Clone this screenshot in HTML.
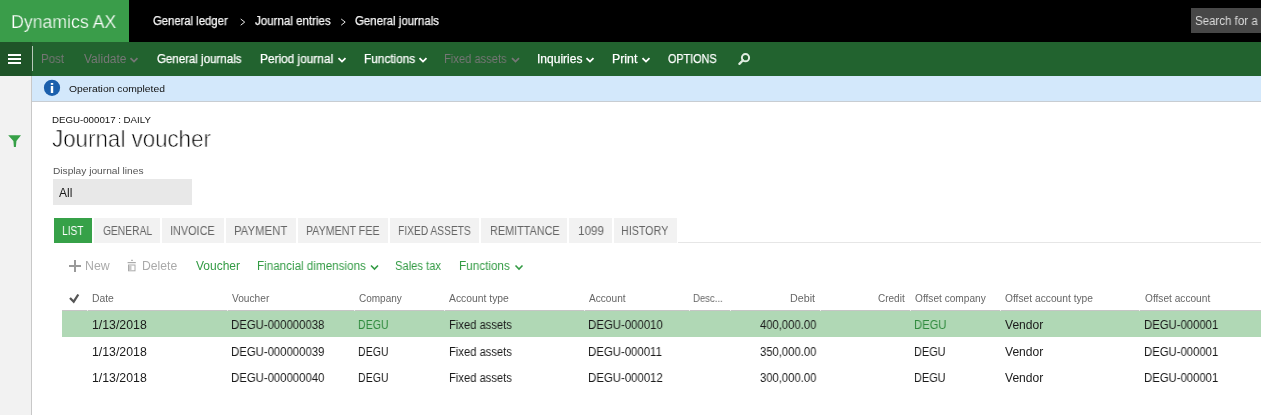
<!DOCTYPE html>
<html><head><meta charset="utf-8">
<style>
html,body{margin:0;padding:0;}
body{width:1261px;height:415px;overflow:hidden;position:relative;background:#fff;font-family:"Liberation Sans",sans-serif;}
.r{position:absolute;}
.t{position:absolute;transform-origin:0 0;will-change:transform;white-space:nowrap;line-height:normal;font-family:"Liberation Sans",sans-serif;}
.bl{display:inline-block;width:0;height:0;vertical-align:baseline;}
svg{position:absolute;overflow:visible;}
</style></head><body>
<!-- top bar -->
<div class="r" style="left:0;top:0;width:1261px;height:42px;background:#000"></div>
<div class="r" style="left:0;top:0;width:129px;height:42px;background:#3a9d4a"></div>
<div class="r" style="left:1191px;top:8px;width:70px;height:25px;background:#474747"></div>
<svg style="left:0;top:0" width="1261" height="42">
 <polyline points="240.7,19 244.7,22.1 240.7,25.2" fill="none" stroke="#e8e8e8" stroke-width="1"/>
 <polyline points="341.2,19 345.2,22.1 341.2,25.2" fill="none" stroke="#e8e8e8" stroke-width="1"/>
</svg>
<!-- action bar -->
<div class="r" style="left:0;top:42px;width:1261px;height:34px;background:#22632f"></div>
<div class="r" style="left:0;top:42px;width:32px;height:34px;background:#1f5428"></div>
<div class="r" style="left:8px;top:54px;width:13px;height:2px;background:#fff"></div>
<div class="r" style="left:8px;top:58px;width:13px;height:2px;background:#fff"></div>
<div class="r" style="left:8px;top:62px;width:13px;height:2px;background:#fff"></div>
<div class="r" style="left:32px;top:46px;width:1px;height:25px;background:#b9c9bb"></div>
<svg style="left:0;top:42px" width="1261" height="34">
 <g fill="none" stroke-width="1.8" stroke-linecap="butt">
  <polyline points="130.5,16.1 134,19.6 137.5,16.1" stroke="#767676"/>
  <polyline points="338.5,16.1 342,19.6 345.5,16.1" stroke="#fff"/>
  <polyline points="419.5,16.1 423,19.6 426.5,16.1" stroke="#fff"/>
  <polyline points="512,16.1 515.5,19.6 519,16.1" stroke="#767676"/>
  <polyline points="586.5,16.1 590,19.6 593.5,16.1" stroke="#fff"/>
  <polyline points="642.5,16.1 646,19.6 649.5,16.1" stroke="#fff"/>
 </g>
 <circle cx="745.5" cy="15.7" r="3.6" fill="none" stroke="#e0ece0" stroke-width="2"/>
 <line x1="743" y1="18.3" x2="739.4" y2="21.9" stroke="#e0ece0" stroke-width="2.3" stroke-linecap="round"/>
</svg>
<!-- sidebar -->
<div class="r" style="left:0;top:76px;width:31px;height:339px;background:#f2f2f2"></div>
<div class="r" style="left:31px;top:76px;width:1px;height:339px;background:#c8c8c8"></div>
<svg style="left:0;top:0" width="32" height="415">
 <polygon points="8.2,135.2 21,135.2 16.4,141 15.9,147 13.9,147 13.4,141" fill="#36a047"/>
</svg>
<!-- info bar -->
<div class="r" style="left:32px;top:76px;width:1229px;height:25px;background:#d3e8fb"></div>
<div class="r" style="left:32px;top:101px;width:1229px;height:1px;background:#c8cdd2"></div>
<svg style="left:0;top:0" width="80" height="110">
 <circle cx="52" cy="87.8" r="8.1" fill="#1b5fac"/>
 <rect x="50.8" y="83" width="2.4" height="1.8" fill="#fff"/>
 <rect x="50.8" y="86" width="2.4" height="7" fill="#fff"/>
</svg>
<!-- dropdown -->
<div class="r" style="left:53px;top:179px;width:139px;height:26px;background:#e8e8e8"></div>
<!-- tabs -->
<div class="r" style="left:54px;top:218px;width:38px;height:25px;background:#36a148"></div>
<div class="r" style="left:94px;top:218px;width:66px;height:25px;background:#f2f2f2"></div>
<div class="r" style="left:162px;top:218px;width:62px;height:25px;background:#f2f2f2"></div>
<div class="r" style="left:226px;top:218px;width:70px;height:25px;background:#f2f2f2"></div>
<div class="r" style="left:298px;top:218px;width:90px;height:25px;background:#f2f2f2"></div>
<div class="r" style="left:390px;top:218px;width:89px;height:25px;background:#f2f2f2"></div>
<div class="r" style="left:481px;top:218px;width:86px;height:25px;background:#f2f2f2"></div>
<div class="r" style="left:569px;top:218px;width:43px;height:25px;background:#f2f2f2"></div>
<div class="r" style="left:614px;top:218px;width:63px;height:25px;background:#f2f2f2"></div>
<div class="r" style="left:678px;top:242px;width:583px;height:1px;background:#e6e6e6"></div>
<!-- toolbar icons -->
<svg style="left:0;top:0" width="1261" height="415">
 <rect x="69" y="265" width="12" height="2" fill="#9a9a9a"/>
 <rect x="74" y="260" width="2" height="12" fill="#9a9a9a"/>
 <rect x="131" y="259.8" width="2" height="1" fill="#aaa"/>
 <rect x="127.6" y="262" width="8.2" height="1.2" fill="#aaa"/>
 <rect x="128.5" y="265" width="6.5" height="5.8" fill="none" stroke="#aaa" stroke-width="1"/>
 <rect x="129" y="265.5" width="2.5" height="5" fill="#c8c8c8"/>
 <g fill="none" stroke-width="1.6" stroke="#339b44">
  <polyline points="371,265.5 374.5,269 378,265.5"/>
  <polyline points="515.5,265.5 519,269 522.5,265.5"/>
 </g>
 <polyline points="70,298 73.7,301.7 78.3,294.5" fill="none" stroke="#555" stroke-width="2.3"/>
</svg>
<!-- grid -->
<div class="r" style="left:62px;top:310px;width:1199px;height:1px;background:#c6c6c6"></div>
<div class="r" style="left:62px;top:311px;width:1199px;height:26px;background:#b0d8b5"></div>
<div class="r" style="left:87px;top:310px;width:1px;height:1px;background:#eee"></div>
<div class="r" style="left:227px;top:310px;width:1px;height:1px;background:#eee"></div>
<div class="r" style="left:354px;top:310px;width:1px;height:1px;background:#eee"></div>
<div class="r" style="left:444px;top:310px;width:1px;height:1px;background:#eee"></div>
<div class="r" style="left:584px;top:310px;width:1px;height:1px;background:#eee"></div>
<div class="r" style="left:689px;top:310px;width:1px;height:1px;background:#eee"></div>
<div class="r" style="left:730px;top:310px;width:1px;height:1px;background:#eee"></div>
<div class="r" style="left:820px;top:310px;width:1px;height:1px;background:#eee"></div>
<div class="r" style="left:910px;top:310px;width:1px;height:1px;background:#eee"></div>
<div class="r" style="left:1000px;top:310px;width:1px;height:1px;background:#eee"></div>
<div class="r" style="left:1139px;top:310px;width:1px;height:1px;background:#eee"></div>
<div class="t" id="t0" style="left:11.00px;top:11.81px;font-size:18px;color:#ffffff;transform:scaleX(0.9835);-webkit-text-stroke:0.25px #3a9d4a">Dynamics AX<i class="bl"></i></div>
<div class="t" id="t1" style="left:153.32px;top:13.91px;font-size:12px;color:#f0f0f0;transform:scaleX(0.9405);-webkit-text-stroke:0.25px #fff">General ledger<i class="bl"></i></div>
<div class="t" id="t2" style="left:254.90px;top:13.91px;font-size:12px;color:#f0f0f0;transform:scaleX(0.9617);-webkit-text-stroke:0.25px #fff">Journal entries<i class="bl"></i></div>
<div class="t" id="t3" style="left:355.24px;top:13.91px;font-size:12px;color:#f0f0f0;transform:scaleX(0.9534);-webkit-text-stroke:0.25px #fff">General journals<i class="bl"></i></div>
<div class="t" id="t4" style="left:1195.00px;top:13.81px;font-size:12px;color:#dcdcdc;transform:scaleX(0.9594);">Search for a<i class="bl"></i></div>
<div class="t" id="t5" style="left:41.34px;top:51.91px;font-size:12px;color:#767676;transform:scaleX(0.9575);">Post<i class="bl"></i></div>
<div class="t" id="t6" style="left:83.90px;top:51.91px;font-size:12px;color:#767676;transform:scaleX(1.0006);">Validate<i class="bl"></i></div>
<div class="t" id="t7" style="left:156.90px;top:51.91px;font-size:12px;color:#ffffff;transform:scaleX(0.9592);-webkit-text-stroke:0.25px #fff">General journals<i class="bl"></i></div>
<div class="t" id="t8" style="left:260.00px;top:51.91px;font-size:12px;color:#ffffff;transform:scaleX(0.9880);-webkit-text-stroke:0.25px #fff">Period journal<i class="bl"></i></div>
<div class="t" id="t9" style="left:364.00px;top:51.91px;font-size:12px;color:#ffffff;transform:scaleX(0.9839);-webkit-text-stroke:0.25px #fff">Functions<i class="bl"></i></div>
<div class="t" id="t10" style="left:444.34px;top:51.91px;font-size:12px;color:#767676;transform:scaleX(0.9309);">Fixed assets<i class="bl"></i></div>
<div class="t" id="t11" style="left:537.00px;top:51.91px;font-size:12px;color:#ffffff;transform:scaleX(1.0016);-webkit-text-stroke:0.25px #fff">Inquiries<i class="bl"></i></div>
<div class="t" id="t12" style="left:612.00px;top:51.91px;font-size:12px;color:#ffffff;transform:scaleX(1.0273);-webkit-text-stroke:0.25px #fff">Print<i class="bl"></i></div>
<div class="t" id="t13" style="left:667.90px;top:51.91px;font-size:12px;color:#ffffff;transform:scaleX(0.9002);-webkit-text-stroke:0.25px #fff">OPTIONS<i class="bl"></i></div>
<div class="t" id="t14" style="left:68.56px;top:83.01px;font-size:9.5px;color:#111111;transform:scaleX(1.0881);">Operation completed<i class="bl"></i></div>
<div class="t" id="t15" style="left:52.34px;top:113.91px;font-size:9.7px;color:#111111;transform:scaleX(0.9965);">DEGU-000017 : DAILY<i class="bl"></i></div>
<div class="t" id="t16" style="left:51.84px;top:124.91px;font-size:24px;color:#000000;transform:scaleX(0.9307);-webkit-text-stroke:0.65px #fff">Journal voucher<i class="bl"></i></div>
<div class="t" id="t17" style="left:52.50px;top:164.91px;font-size:9.5px;color:#555555;transform:scaleX(1.0711);">Display journal lines<i class="bl"></i></div>
<div class="t" id="t18" style="left:59.40px;top:185.70px;font-size:12px;color:#1a1a1a;transform:scaleX(0.9768);">All<i class="bl"></i></div>
<div class="t" id="t19" style="left:62.00px;top:224.01px;font-size:12px;color:#ffffff;transform:scaleX(0.8483);">LIST<i class="bl"></i></div>
<div class="t" id="t20" style="left:102.90px;top:224.01px;font-size:12px;color:#666666;transform:scaleX(0.8551);">GENERAL<i class="bl"></i></div>
<div class="t" id="t21" style="left:170.34px;top:224.01px;font-size:12px;color:#666666;transform:scaleX(0.9061);">INVOICE<i class="bl"></i></div>
<div class="t" id="t22" style="left:234.00px;top:224.01px;font-size:12px;color:#666666;transform:scaleX(0.9477);">PAYMENT<i class="bl"></i></div>
<div class="t" id="t23" style="left:306.16px;top:224.01px;font-size:12px;color:#666666;transform:scaleX(0.8888);">PAYMENT FEE<i class="bl"></i></div>
<div class="t" id="t24" style="left:398.00px;top:224.01px;font-size:12px;color:#666666;transform:scaleX(0.8526);">FIXED ASSETS<i class="bl"></i></div>
<div class="t" id="t25" style="left:489.50px;top:224.01px;font-size:12px;color:#666666;transform:scaleX(0.9036);">REMITTANCE<i class="bl"></i></div>
<div class="t" id="t26" style="left:578.16px;top:224.01px;font-size:12px;color:#666666;transform:scaleX(0.9727);">1099<i class="bl"></i></div>
<div class="t" id="t27" style="left:621.42px;top:224.01px;font-size:12px;color:#666666;transform:scaleX(0.8936);">HISTORY<i class="bl"></i></div>
<div class="t" id="t28" style="left:85.00px;top:258.81px;font-size:12px;color:#aaaaaa;transform:scaleX(1.0274);">New<i class="bl"></i></div>
<div class="t" id="t29" style="left:142.08px;top:258.81px;font-size:12px;color:#aaaaaa;transform:scaleX(1.0134);">Delete<i class="bl"></i></div>
<div class="t" id="t30" style="left:195.64px;top:258.81px;font-size:12px;color:#339b44;transform:scaleX(0.9938);">Voucher<i class="bl"></i></div>
<div class="t" id="t31" style="left:257.16px;top:258.81px;font-size:12px;color:#339b44;transform:scaleX(0.9714);">Financial dimensions<i class="bl"></i></div>
<div class="t" id="t32" style="left:395.34px;top:258.81px;font-size:12px;color:#339b44;transform:scaleX(0.9328);">Sales tax<i class="bl"></i></div>
<div class="t" id="t33" style="left:459.34px;top:258.81px;font-size:12px;color:#339b44;transform:scaleX(0.9772);">Functions<i class="bl"></i></div>
<div class="t" id="t34" style="left:92.16px;top:293.01px;font-size:10px;color:#666666;transform:scaleX(1.0347);">Date<i class="bl"></i></div>
<div class="t" id="t35" style="left:231.90px;top:293.01px;font-size:10px;color:#666666;transform:scaleX(1.0161);">Voucher<i class="bl"></i></div>
<div class="t" id="t36" style="left:359.24px;top:293.01px;font-size:10px;color:#666666;transform:scaleX(0.9890);">Company<i class="bl"></i></div>
<div class="t" id="t37" style="left:449.40px;top:293.01px;font-size:10px;color:#666666;transform:scaleX(1.0351);">Account type<i class="bl"></i></div>
<div class="t" id="t38" style="left:588.90px;top:293.01px;font-size:10px;color:#666666;transform:scaleX(1.0121);">Account<i class="bl"></i></div>
<div class="t" id="t39" style="left:693.42px;top:293.01px;font-size:10px;color:#666666;transform:scaleX(0.9565);">Desc...<i class="bl"></i></div>
<div class="t" id="t40" style="left:790.42px;top:293.01px;font-size:10px;color:#666666;transform:scaleX(1.0709);">Debit<i class="bl"></i></div>
<div class="t" id="t41" style="left:878.32px;top:293.01px;font-size:10px;color:#666666;transform:scaleX(0.9906);">Credit<i class="bl"></i></div>
<div class="t" id="t42" style="left:914.90px;top:293.01px;font-size:10px;color:#666666;transform:scaleX(1.0129);">Offset company<i class="bl"></i></div>
<div class="t" id="t43" style="left:1005.48px;top:293.01px;font-size:10px;color:#666666;transform:scaleX(1.0235);">Offset account type<i class="bl"></i></div>
<div class="t" id="t44" style="left:1144.90px;top:293.01px;font-size:10px;color:#666666;transform:scaleX(1.0141);">Offset account<i class="bl"></i></div>
<div class="t" id="t45" style="left:92.00px;top:318.01px;font-size:12px;color:#1a1a1a;transform:scaleX(1.0252);">1/13/2018<i class="bl"></i></div>
<div class="t" id="t46" style="left:231.00px;top:318.01px;font-size:12px;color:#1a1a1a;transform:scaleX(0.9456);">DEGU-000000038<i class="bl"></i></div>
<div class="t" id="t47" style="left:358.34px;top:318.01px;font-size:12px;color:#2f8a3d;transform:scaleX(0.8822);">DEGU<i class="bl"></i></div>
<div class="t" id="t48" style="left:448.50px;top:318.01px;font-size:12px;color:#1a1a1a;transform:scaleX(0.9340);">Fixed assets<i class="bl"></i></div>
<div class="t" id="t49" style="left:588.00px;top:318.01px;font-size:12px;color:#1a1a1a;transform:scaleX(0.9506);">DEGU-000010<i class="bl"></i></div>
<div class="t" id="t50" style="left:759.64px;top:318.01px;font-size:12px;color:#1a1a1a;transform:scaleX(0.9374);">400,000.00<i class="bl"></i></div>
<div class="t" id="t51" style="left:914.00px;top:318.01px;font-size:12px;color:#2f8a3d;transform:scaleX(0.9339);">DEGU<i class="bl"></i></div>
<div class="t" id="t52" style="left:1005.48px;top:318.01px;font-size:12px;color:#1a1a1a;transform:scaleX(1.0069);">Vendor<i class="bl"></i></div>
<div class="t" id="t53" style="left:1144.00px;top:318.01px;font-size:12px;color:#1a1a1a;transform:scaleX(0.9433);">DEGU-000001<i class="bl"></i></div>
<div class="t" id="t54" style="left:92.00px;top:345.01px;font-size:12px;color:#1a1a1a;transform:scaleX(1.0252);">1/13/2018<i class="bl"></i></div>
<div class="t" id="t55" style="left:231.00px;top:345.01px;font-size:12px;color:#1a1a1a;transform:scaleX(0.9458);">DEGU-000000039<i class="bl"></i></div>
<div class="t" id="t56" style="left:358.34px;top:345.01px;font-size:12px;color:#1a1a1a;transform:scaleX(0.8822);">DEGU<i class="bl"></i></div>
<div class="t" id="t57" style="left:448.50px;top:345.01px;font-size:12px;color:#1a1a1a;transform:scaleX(0.9342);">Fixed assets<i class="bl"></i></div>
<div class="t" id="t58" style="left:588.00px;top:345.01px;font-size:12px;color:#1a1a1a;transform:scaleX(0.9498);">DEGU-000011<i class="bl"></i></div>
<div class="t" id="t59" style="left:759.64px;top:345.01px;font-size:12px;color:#1a1a1a;transform:scaleX(0.9374);">350,000.00<i class="bl"></i></div>
<div class="t" id="t60" style="left:914.00px;top:345.01px;font-size:12px;color:#1a1a1a;transform:scaleX(0.9085);">DEGU<i class="bl"></i></div>
<div class="t" id="t61" style="left:1005.48px;top:345.01px;font-size:12px;color:#1a1a1a;transform:scaleX(1.0069);">Vendor<i class="bl"></i></div>
<div class="t" id="t62" style="left:1144.00px;top:345.01px;font-size:12px;color:#1a1a1a;transform:scaleX(0.9433);">DEGU-000001<i class="bl"></i></div>
<div class="t" id="t63" style="left:92.00px;top:371.01px;font-size:12px;color:#1a1a1a;transform:scaleX(1.0252);">1/13/2018<i class="bl"></i></div>
<div class="t" id="t64" style="left:231.00px;top:371.01px;font-size:12px;color:#1a1a1a;transform:scaleX(0.9458);">DEGU-000000040<i class="bl"></i></div>
<div class="t" id="t65" style="left:358.34px;top:371.01px;font-size:12px;color:#1a1a1a;transform:scaleX(0.8822);">DEGU<i class="bl"></i></div>
<div class="t" id="t66" style="left:448.50px;top:371.01px;font-size:12px;color:#1a1a1a;transform:scaleX(0.9342);">Fixed assets<i class="bl"></i></div>
<div class="t" id="t67" style="left:588.00px;top:371.01px;font-size:12px;color:#1a1a1a;transform:scaleX(0.9506);">DEGU-000012<i class="bl"></i></div>
<div class="t" id="t68" style="left:759.64px;top:371.01px;font-size:12px;color:#1a1a1a;transform:scaleX(0.9374);">300,000.00<i class="bl"></i></div>
<div class="t" id="t69" style="left:914.00px;top:371.01px;font-size:12px;color:#1a1a1a;transform:scaleX(0.9085);">DEGU<i class="bl"></i></div>
<div class="t" id="t70" style="left:1005.48px;top:371.01px;font-size:12px;color:#1a1a1a;transform:scaleX(1.0069);">Vendor<i class="bl"></i></div>
<div class="t" id="t71" style="left:1144.00px;top:371.01px;font-size:12px;color:#1a1a1a;transform:scaleX(0.9433);">DEGU-000001<i class="bl"></i></div>
</body></html>
